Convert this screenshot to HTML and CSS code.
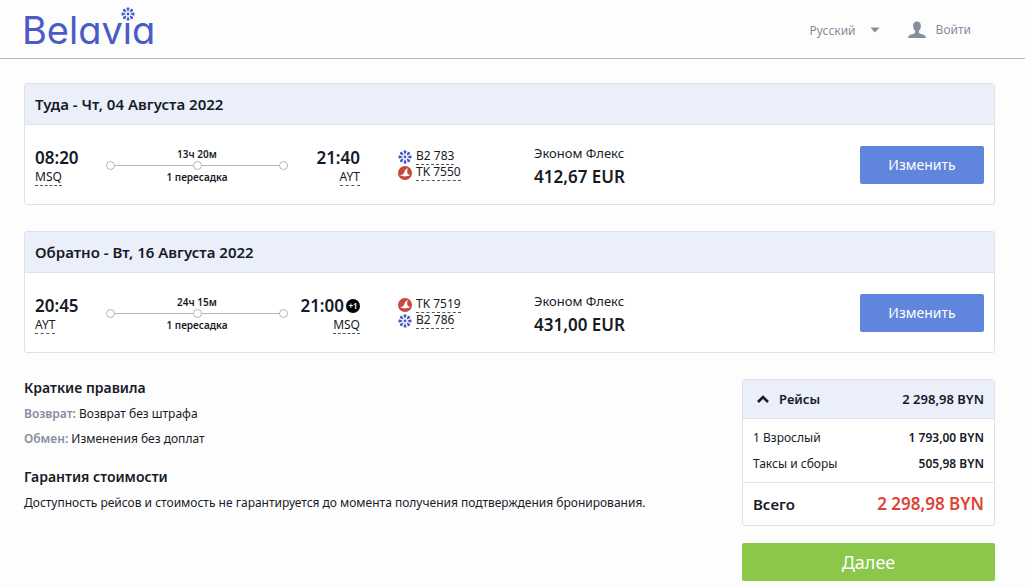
FILE: index.html
```html
<!DOCTYPE html>
<html lang="ru">
<head>
    <meta charset="UTF-8">
    <meta name="viewport" content="width=device-width, initial-scale=1.0">
    <title>Belavia</title>
    <link rel="stylesheet" href="styles.css">
</head>
<body>

    <svg class="sprite" aria-hidden="true">
        <symbol id="flower" viewBox="-12 -12 24 24">
            <path id="petal" d="M-0.7 -4.600 L-2.800 -9.800 Q0 -13.200 2.800 -9.800 L0.7 -4.600 Z"/>
            <use href="#petal" transform="rotate(45)"/>
            <use href="#petal" transform="rotate(90)"/>
            <use href="#petal" transform="rotate(135)"/>
            <use href="#petal" transform="rotate(180)"/>
            <use href="#petal" transform="rotate(225)"/>
            <use href="#petal" transform="rotate(270)"/>
            <use href="#petal" transform="rotate(315)"/>
            <circle r="2.400"/>
        </symbol>
        <symbol id="turkish" viewBox="0 0 14 14">
            <circle cx="7" cy="7" r="7" fill="#c8473d"/>
            <path d="M2 9.300 C4.200 9.200 5.600 8.200 6.300 6.200 C6.900 4.300 7.900 2.800 9.900 2 C9 3.800 9 5.800 9.500 7.600 C10.100 8.500 11 8.900 12.200 9 C9.200 10.900 4.800 10.900 2 9.300 Z" fill="#fff"/>
        </symbol>
    </svg>

    <header class="header">
        <a class="logo" href="#">Belavia<svg class="logo-flower"><use href="#flower"/></svg></a>
        <div class="header-menu">
            <button class="lang" type="button">Русский
                <svg width="10" height="6" viewBox="0 0 10 6"><path d="M0.5 0.5h9L5 5.5z" fill="currentColor"/></svg>
            </button>
            <a class="login" href="#">
                <svg width="18" height="18" viewBox="0 0 18 18"><path d="M9 0.500C11.600 0.500 12.900 2.200 12.900 4.700C12.900 6.900 12.100 8.600 11 9.600V11.500C11.300 12.500 12.300 12.900 14 13.300C16.300 13.900 17.800 14.700 18 17H0C0.200 14.700 1.700 13.900 4 13.300C5.700 12.900 6.700 12.500 7 11.500V9.600C5.900 8.600 5.100 6.900 5.100 4.700C5.100 2.200 6.400 0.500 9 0.500Z" fill="currentColor"/></svg>
                Войти
            </a>
        </div>
    </header>

    <main class="page">
        <section class="card">
            <h2 class="card-title">Туда - Чт, 04 Августа 2022</h2>
            <div class="card-body">
                <div class="point">
                    <div class="time">08:20</div>
                    <abbr class="code">MSQ</abbr>
                </div>
                <div class="route">
                    <div>13ч 20м</div>
                    <div class="track"><i></i><i></i><i></i></div>
                    <div>1 пересадка</div>
                </div>
                <div class="point arrival">
                    <div class="time">21:40</div>
                    <abbr class="code">AYT</abbr>
                </div>
                <div class="flights">
                    <div class="flight"><svg class="airline"><use href="#flower"/></svg><abbr class="code">B2 783</abbr></div>
                    <div class="flight"><svg class="airline"><use href="#turkish"/></svg><abbr class="code">TK 7550</abbr></div>
                </div>
                <div class="fare">
                    <div>Эконом Флекс</div>
                    <div class="price">412,67 EUR</div>
                </div>
                <button class="btn btn-blue" type="button">Изменить</button>
            </div>
        </section>

        <section class="card">
            <h2 class="card-title">Обратно - Вт, 16 Августа 2022</h2>
            <div class="card-body">
                <div class="point">
                    <div class="time">20:45</div>
                    <abbr class="code">AYT</abbr>
                </div>
                <div class="route">
                    <div>24ч 15м</div>
                    <div class="track"><i></i><i></i><i></i></div>
                    <div>1 пересадка</div>
                </div>
                <div class="point arrival">
                    <div class="time">21:00<span class="next-day">+1</span></div>
                    <abbr class="code">MSQ</abbr>
                </div>
                <div class="flights">
                    <div class="flight"><svg class="airline"><use href="#turkish"/></svg><abbr class="code">TK 7519</abbr></div>
                    <div class="flight"><svg class="airline"><use href="#flower"/></svg><abbr class="code">B2 786</abbr></div>
                </div>
                <div class="fare">
                    <div>Эконом Флекс</div>
                    <div class="price">431,00 EUR</div>
                </div>
                <button class="btn btn-blue" type="button">Изменить</button>
            </div>
        </section>

        <div class="bottom">
            <div class="rules">
                <h3>Краткие правила</h3>
                <p><b>Возврат:</b> Возврат без штрафа</p>
                <p><b>Обмен:</b> Изменения без доплат</p>
                <h3>Гарантия стоимости</h3>
                <p>Доступность рейсов и стоимость не гарантируется до момента получения подтверждения бронирования.</p>
            </div>
            <aside class="summary">
                <div class="totals">
                    <button class="totals-head" type="button">
                        <svg width="12" height="8" viewBox="0 0 12 8"><path d="M1 7l5-5 5 5" fill="none" stroke="currentColor" stroke-width="2.600"/></svg>
                        <span>Рейсы</span>
                        <span class="sum">2 298,98 BYN</span>
                    </button>
                    <div class="totals-list">
                        <div class="row"><span>1 Взрослый</span><b>1 793,00 BYN</b></div>
                        <div class="row"><span>Таксы и сборы</span><b>505,98 BYN</b></div>
                    </div>
                    <div class="row total"><span>Всего</span><span class="total-sum">2 298,98 BYN</span></div>
                </div>
                <button class="btn btn-green" type="button">Далее</button>
            </aside>
        </div>
    </main>

</body>
</html>
```
FILE: styles.css
```css
* {
    box-sizing: border-box;
}
body {
    margin: 0;
    background-color: #fdfdfe;
    color: #161b26;
    font-family: "Noto Sans", "Open Sans", sans-serif;
    font-size: 12px;
    line-height: 16px;
}
h2, h3, p {
    margin: 0;
}
a {
    color: inherit;
    text-decoration: none;
}
button {
    border: none;
    padding: 0;
    font-family: inherit;
    color: inherit;
    cursor: pointer;
}
.sprite {
    position: absolute;
    width: 0;
    height: 0;
}

/* header */
.header {
    display: flex;
    justify-content: space-between;
    align-items: center;
    height: 59px;
    padding: 2px 54px 0 22px;
    border-bottom: 1px solid #b9babf;
}
.logo {
    position: relative;
    font-family: "Inter", "Lato", sans-serif;
    font-feature-settings: "cv11";
    font-size: 38px;
    line-height: 56px;
    color: #4a5cc4;
}
.logo-flower {
    position: absolute;
    top: 5px;
    right: 20px;
    width: 14px;
    height: 14px;
    border-radius: 50%;
    background-color: #fdfdfe;
    fill: #4a5cc4;
}
.header-menu {
    display: flex;
    gap: 28px;
    color: #868d9d;
}
.lang, .login {
    display: flex;
    align-items: center;
    font-size: 12px;
    background: none;
}
.lang {
    gap: 14px;
}
.login {
    gap: 10px;
}

/* flights */
.page {
    padding: 24px 30px 6px 24px;
}
.card {
    margin-bottom: 26px;
    border: 1px solid #dfe1e6;
    border-radius: 3px;
    background-color: #fff;
}
.card-title {
    padding: 10px;
    border-bottom: 1px solid #dfe1e6;
    background-color: #ebeff9;
    font-size: 15px;
    line-height: 20px;
    font-weight: 600;
}
.card-body {
    display: grid;
    grid-template-columns: 71px 182px 72px 136px 1fr 124px;
    align-items: center;
    height: 79px;
    padding: 0 10px;
}
.point {
    padding-top: 4px;
}
.time {
    display: flex;
    align-items: center;
    font-size: 17px;
    line-height: 22px;
    font-weight: 600;
}
.arrival {
    display: flex;
    flex-direction: column;
    align-items: flex-end;
}
.next-day {
    width: 14px;
    height: 14px;
    margin-left: 2px;
    border-radius: 50%;
    background-color: #000;
    color: #fff;
    font-size: 8px;
    line-height: 14px;
    text-align: center;
}
.code {
    display: inline-block;
    border-bottom: 1px dashed #50545e;
    line-height: 16px;
}
.route {
    padding-top: 2px;
    font-size: 10px;
    line-height: 14px;
    font-weight: 600;
    text-align: center;
}
.track {
    display: flex;
    justify-content: space-between;
    background: linear-gradient(#b4b5ba, #b4b5ba) center / 100% 1px no-repeat;
}
.track i {
    width: 9px;
    height: 9px;
    border: 1px solid #b4b5ba;
    border-radius: 50%;
    background-color: #fff;
}
.flights {
    padding-left: 38px;
}
.flight {
    display: flex;
    align-items: center;
    gap: 4px;
    height: 16px;
}
.airline {
    width: 14px;
    height: 14px;
    fill: #4a5cc4;
}
.fare {
    padding-left: 38px;
    font-size: 13px;
    line-height: 24px;
}
.price {
    font-size: 17px;
    font-weight: 600;
}
.btn {
    width: 100%;
    height: 38px;
    border-radius: 2px;
    color: #fff;
}
.btn-blue {
    background-color: #6085dc;
    font-size: 14px;
}
.btn-green {
    background-color: #8bc84a;
    font-size: 18px;
}

/* rules and price */
.bottom {
    display: flex;
    justify-content: space-between;
}
.rules h3 {
    margin-bottom: 9px;
    font-size: 14px;
    line-height: 18px;
    font-weight: 600;
}
.rules p {
    margin-bottom: 9px;
}
.rules p + h3 {
    margin-top: 21px;
}
.rules b {
    font-weight: 600;
    color: #868d9d;
}
.summary {
    width: 253px;
}
.totals {
    margin-bottom: 17px;
    border: 1px solid #dfe1e6;
    border-radius: 3px;
    background-color: #fff;
}
.totals-head {
    display: flex;
    align-items: center;
    gap: 10px;
    width: 100%;
    height: 39px;
    padding: 0 10px 0 14px;
    border-bottom: 1px solid #dfe1e6;
    background-color: #ebeff9;
    font-size: 13px;
    font-weight: 600;
}
.sum {
    margin-left: auto;
}
.totals-list {
    padding: 6px 0 5px;
    border-bottom: 1px solid #dfe1e6;
}
.row {
    display: flex;
    justify-content: space-between;
    padding: 0 10px;
    line-height: 26px;
}
.row b {
    font-weight: 600;
}
.total {
    font-size: 15px;
    line-height: 42px;
    font-weight: 600;
}
.total-sum {
    font-size: 17px;
    color: #dd4436;
}
```
